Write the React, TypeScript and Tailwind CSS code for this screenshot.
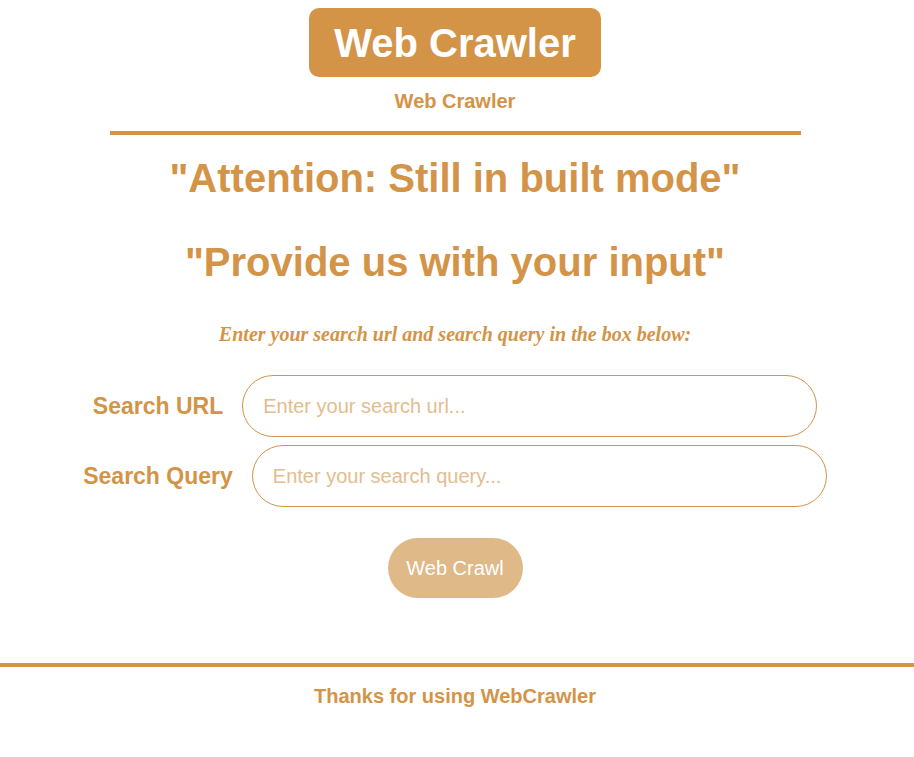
import { useState } from 'react';

export default function App() {
    const [url, setUrl] = useState('');
    const [query, setQuery] = useState('');

    return (
        <div className="flex min-h-[757px] w-full flex-col items-center bg-white font-['Liberation_Sans',Arial,sans-serif] text-[#d39448]">
            <div className="flex w-full flex-col items-center pr-[4px]">
                <h1 className="mt-2 flex h-[69px] items-center rounded-[10px] bg-[#d39448] px-[25px] text-[40px] font-bold leading-[46px] text-white">
                    Web Crawler
                </h1>
                <p className="mt-[13px] text-[20px] font-bold leading-[23px]">Web Crawler</p>
                <div className="mt-[18px] h-[4px] w-[691px] bg-[#d39448]" />

                <h2 className="mt-[20px] text-[40px] font-bold leading-[46px]">"Attention: Still in built mode"</h2>
                <h2 className="mt-[38px] text-[40px] font-bold leading-[46px]">"Provide us with your input"</h2>
                <p className="mt-[38px] font-['Liberation_Serif','Times_New_Roman',serif] text-[20px] font-bold italic leading-[23px]">
                    Enter your search url and search query in the box below:
                </p>

                <form className="mt-[29px] flex flex-col items-center gap-2" onSubmit={(e) => e.preventDefault()}>
                    <div className="flex items-center gap-[19px]">
                        <label className="text-[23px] font-bold">Search URL</label>
                        <input
                            type="text"
                            value={url}
                            onChange={(e) => setUrl(e.target.value)}
                            placeholder="Enter your search url..."
                            className="h-[62px] w-[575px] rounded-full border border-[#d39448] px-[20px] text-[20px] text-[#d39448] outline-none placeholder:text-[#e3bd8e]"
                        />
                    </div>
                    <div className="flex items-center gap-[19px]">
                        <label className="text-[23px] font-bold">Search Query</label>
                        <input
                            type="text"
                            value={query}
                            onChange={(e) => setQuery(e.target.value)}
                            placeholder="Enter your search query..."
                            className="h-[62px] w-[575px] rounded-full border border-[#d39448] px-[20px] text-[20px] text-[#d39448] outline-none placeholder:text-[#e3bd8e]"
                        />
                    </div>
                    <button type="submit" className="mt-[23px] h-[60px] w-[135px] rounded-full bg-[#e0b988] text-[20px] text-white">
                        Web Crawl
                    </button>
                </form>
            </div>

            <div className="mt-[65px] h-[4px] w-full bg-[#d39448]" />
            <p className="mt-[18px] pr-[4px] text-[20px] font-bold leading-[23px]">Thanks for using WebCrawler</p>
        </div>
    );
}
